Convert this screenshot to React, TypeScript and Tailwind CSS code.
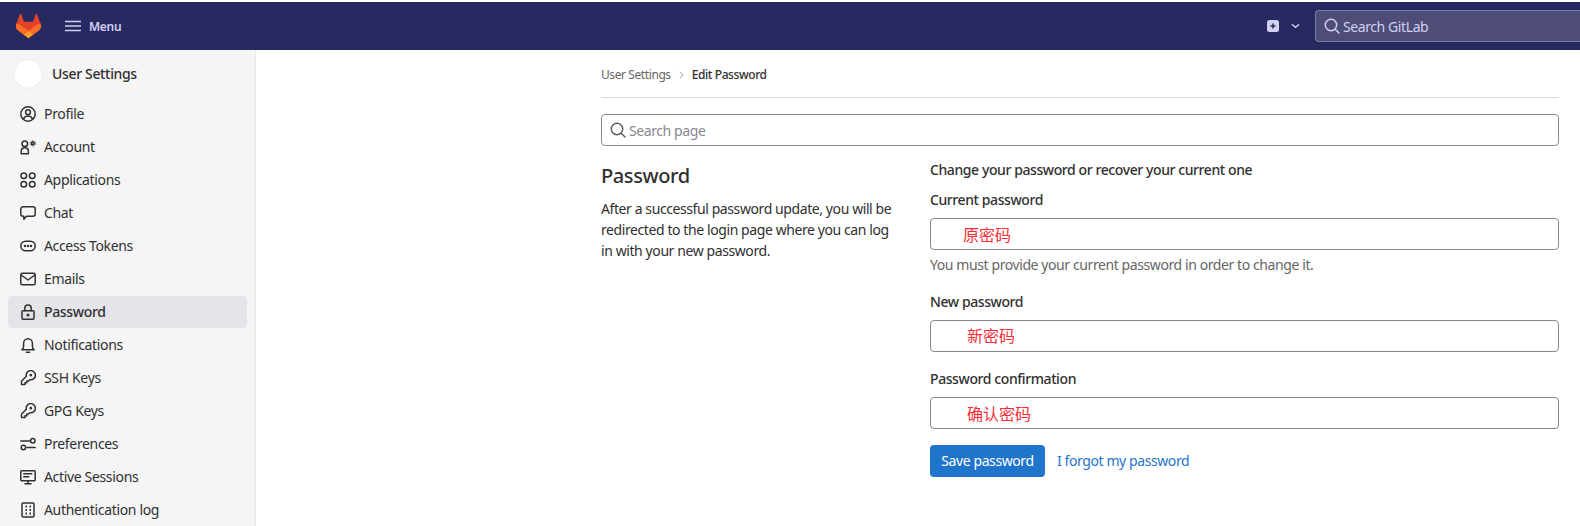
import type { ReactNode } from "react";

const font = { fontFamily: '"Noto Sans", "Noto Sans CJK SC", sans-serif' };

function Glyph({ children }: { children: ReactNode }) {
  return (
    <svg
      viewBox="0 0 16 16"
      className="h-4 w-4 shrink-0 text-[#303030]"
      fill="none"
      stroke="currentColor"
      strokeWidth="1.5"
      strokeLinecap="round"
      strokeLinejoin="round"
    >
      {children}
    </svg>
  );
}

const Key = (
  <>
    <path d="M6.300 6.200a4.600 4.600 0 1 1 3.500 3.500L8.500 11H6.800v1.700H5v1.800H1.500v-3.200z" />
    <circle cx="10.800" cy="5.200" r=".6" fill="currentColor" />
  </>
);

const items: { label: string; icon: ReactNode; active?: boolean }[] = [
  {
    label: "Profile",
    icon: (
      <>
        <circle cx="8" cy="8" r="7.200" />
        <circle cx="8" cy="6.200" r="2.400" />
        <path d="M3.600 13c.6-2 2.400-3 4.400-3s3.800 1 4.400 3" />
      </>
    ),
  },
  {
    label: "Account",
    icon: (
      <>
        <circle cx="4.800" cy="4.800" r="2.800" />
        <path d="M1.200 14.800v-2.600c0-2 1.600-3.400 3.600-3.400s3.600 1.400 3.600 3.400v2.600z" />
        <circle cx="12.800" cy="4.400" r="1.300" strokeWidth="1.600" />
        <circle cx="12.800" cy="4.400" r="2.700" strokeWidth="1" strokeDasharray="1.400 1.430" strokeLinecap="butt" />
      </>
    ),
  },
  {
    label: "Applications",
    icon: (
      <>
        <circle cx="3.800" cy="3.800" r="2.800" />
        <circle cx="12.200" cy="3.800" r="2.800" />
        <circle cx="3.800" cy="12.200" r="2.800" />
        <circle cx="12.200" cy="12.200" r="2.800" />
      </>
    ),
  },
  {
    label: "Chat",
    icon: <path d="M3 1.800h10c1.200 0 2.200 1 2.200 2.200v5c0 1.200-1 2.200-2.200 2.200H6.500l-2.700 3V11.200H3C1.800 11.200.8 10.200.8 9V4c0-1.200 1-2.200 2.200-2.200z" />,
  },
  {
    label: "Access Tokens",
    icon: (
      <>
        <rect x=".8" y="3.200" width="14.400" height="9.600" rx="4.800" />
        <circle cx="5" cy="8" r=".5" fill="currentColor" />
        <circle cx="8" cy="8" r=".5" fill="currentColor" />
        <circle cx="11" cy="8" r=".5" fill="currentColor" />
      </>
    ),
  },
  {
    label: "Emails",
    icon: (
      <>
        <rect x=".8" y="2.200" width="14.400" height="11.600" rx="1.600" />
        <path d="m1.200 4 6.800 5 6.800-5" />
      </>
    ),
  },
  {
    label: "Password",
    active: true,
    icon: (
      <>
        <rect x="2" y="6.800" width="12" height="8.400" rx="1" />
        <path d="M4.800 6.800V4.200a3.200 3.200 0 0 1 6.400 0v2.600" />
        <circle cx="8" cy="11" r=".8" fill="currentColor" />
      </>
    ),
  },
  {
    label: "Notifications",
    icon: (
      <>
        <path d="M1.800 12.800c1.200-1 1.800-2 1.800-3.600V6.200a4.400 4.400 0 0 1 8.800 0v3c0 1.600.6 2.600 1.800 3.600z" />
        <path d="M6.400 15.200h3.200" />
      </>
    ),
  },
  { label: "SSH Keys", icon: Key },
  { label: "GPG Keys", icon: Key },
  {
    label: "Preferences",
    icon: (
      <>
        <path d="M.8 5h9.200M7 11.500h8.200" />
        <circle cx="12.800" cy="4.800" r="2.200" />
        <circle cx="3.400" cy="11.500" r="2.200" />
      </>
    ),
  },
  {
    label: "Active Sessions",
    icon: (
      <>
        <rect x=".8" y="1.800" width="14.400" height="10" rx="1" />
        <path d="M3.800 4.800h8M3.800 7.800h5M5 14.800h6M8 12v2.800" />
      </>
    ),
  },
  {
    label: "Authentication log",
    icon: (
      <>
        <rect x="2" y="1" width="12" height="14" rx="1" />
        <path d="M5.500 4.500h1.500M9.500 4.500h1.500M5.500 8h1.500M9.500 8h1.500M5.500 11.500h1.500M9.500 11.500h1.500" strokeWidth="1.800" strokeLinecap="butt" />
      </>
    ),
  },
];

function SearchIcon({ className }: { className: string }) {
  return (
    <svg viewBox="0 0 16 16" className={className} fill="none" stroke="currentColor" strokeWidth="1.5" strokeLinecap="round">
      <circle cx="7" cy="7" r="5.700" />
      <path d="m11.200 11.200 3.800 3.800" />
    </svg>
  );
}

function Annotated({ text, indent }: { text: string; indent: string }) {
  return (
    <div className={`mt-2 flex h-8 items-center rounded border border-[#89888d] bg-white text-base tracking-normal text-[#fb2c36] ${indent}`}>
      {text}
    </div>
  );
}

export default function App() {
  return (
    <div className="flex h-[526px] flex-col overflow-hidden bg-white text-sm tracking-[-0.41px] text-[#303030]" style={font}>
      <div className="h-[2px] shrink-0 bg-white" />
      <header className="flex h-12 shrink-0 items-center bg-[#292961] pl-4">
        <svg viewBox="0 0 25 24" className="h-6 w-[25px]">
          <path d="m24.507 9.5-.034-.09L21.082.562a.896.896 0 0 0-1.694.091l-2.29 7.01H7.825L5.535.653a.898.898 0 0 0-1.694-.09L.451 9.411.416 9.5a6.297 6.297 0 0 0 2.09 7.278l.012.01.03.022 5.16 3.867 2.56 1.935 1.554 1.176a1.051 1.051 0 0 0 1.268 0l1.555-1.176 2.56-1.935 5.197-3.89.014-.01A6.297 6.297 0 0 0 24.507 9.5Z" fill="#E24329" />
          <path d="m24.507 9.5-.034-.09a11.44 11.44 0 0 0-4.56 2.051l-7.447 5.632 4.742 3.584 5.197-3.89.014-.01A6.297 6.297 0 0 0 24.507 9.5Z" fill="#FC6D26" />
          <path d="m7.707 20.677 2.56 1.935 1.555 1.176a1.051 1.051 0 0 0 1.268 0l1.555-1.176 2.56-1.935-4.743-3.584-4.755 3.584Z" fill="#FCA326" />
          <path d="M5.010 11.461a11.430 11.430 0 0 0-4.560-2.050L.416 9.500a6.297 6.297 0 0 0 2.090 7.278l.012.010.030.022 5.160 3.867 4.745-3.584-7.444-5.632Z" fill="#FC6D26" />
        </svg>
        <svg viewBox="0 0 16 12" className="ml-6 h-3 w-4 text-[#d1d0f0]" stroke="currentColor" strokeWidth="1.500">
          <path d="M0 1.500h16M0 6h16M0 10.500h16" />
        </svg>
        <span className="ml-2 pt-[2px] text-xs font-semibold tracking-[-0.3px] text-[#d1d0f0]">Menu</span>
        <div className="ml-auto flex items-center">
          <svg viewBox="0 0 12 12" className="h-3 w-3">
            <rect width="12" height="12" rx="2.500" fill="#d1d0f0" />
            <path d="M6 3.500v5M3.500 6h5" stroke="#292961" strokeWidth="1.500" />
          </svg>
          <svg viewBox="0 0 10 6" className="ml-3 h-[6px] w-[9px] text-[#d1d0f0]" fill="none" stroke="currentColor" strokeWidth="1.500">
            <path d="m1 1 4 3.500L9 1" />
          </svg>
          <div className="ml-[15px] flex h-8 w-[265px] items-center rounded-l border border-r-0 border-[#7c7ca8] bg-[#4d4d78] pl-2 text-[#d1d0f0]">
            <SearchIcon className="h-4 w-4 shrink-0" />
            <input readOnly placeholder="Search GitLab" className="ml-[3px] w-full bg-transparent pt-[2px] outline-none placeholder:text-[#d1d0f0]" />
          </div>
        </div>
      </header>
      <div className="flex min-h-0 flex-1">
        <aside className="w-[256px] shrink-0 border-r border-[#e8e8e8] bg-[#f5f5f5] px-2 tracking-[-0.34px]">
          <div className="flex h-[48px] items-center pl-[5px]">
            <div className="h-[30px] w-[30px] rounded-full border border-[#ececec] bg-white" />
            <span className="ml-[9px] font-medium">User Settings</span>
          </div>
          <nav className="flex flex-col gap-[1px]">
            {items.map((item) => (
              <div
                key={item.label}
                className={`flex h-8 w-[239px] items-center gap-2 rounded-[4px] pl-3 ${item.active ? "bg-[#e4e4e9] font-medium" : ""}`}
              >
                <Glyph>{item.icon}</Glyph>
                <span>{item.label}</span>
              </div>
            ))}
          </nav>
        </aside>
        <main className="flex-1 pl-[345px] pr-[21px]">
          <div className="flex h-[48px] items-center gap-2 border-b border-[#dcdcde] pt-[2px] text-xs">
            <span className="text-[#666]">User Settings</span>
            <svg viewBox="0 0 6 10" className="h-2 w-[5px] text-[#888]" fill="none" stroke="currentColor">
              <path d="m1 1 4 4-4 4" />
            </svg>
            <span className="font-medium">Edit Password</span>
          </div>
          <div className="mt-4 flex h-8 items-center rounded border border-[#89888d] pl-2 text-[#5e5e5e]">
            <SearchIcon className="h-4 w-4 shrink-0" />
            <input readOnly placeholder="Search page" className="ml-[3px] w-full pt-[2px] outline-none placeholder:text-[#89888d]" />
          </div>
          <div className="flex">
            <section className="mt-[16px] w-[329px] shrink-0">
              <h2 className="text-xl font-medium leading-7">Password</h2>
              <p className="mt-2 w-[300px] leading-[21px]">
                After a successful password update, you will be redirected to the login page where you can log in with your new password.
              </p>
            </section>
            <form className="mt-[14px] flex-1">
              <h3 className="font-medium leading-5">Change your password or recover your current one</h3>
              <label className="mt-[10px] block font-medium leading-5">Current password</label>
              <Annotated text="原密码" indent="pl-8 pt-[1px]" />
              <p className="mt-[5px] leading-5 text-[#666]">You must provide your current password in order to change it.</p>
              <label className="mt-[17px] block font-medium leading-5">New password</label>
              <Annotated text="新密码" indent="pl-9" />
              <label className="mt-[17px] block font-medium leading-5">Password confirmation</label>
              <Annotated text="确认密码" indent="pl-9 pt-[2px]" />
              <div className="mt-4 flex items-center">
                <button type="button" className="h-8 w-[115px] rounded bg-[#1f75cb] text-white">Save password</button>
                <a className="ml-3 text-[#1f75cb]">I forgot my password</a>
              </div>
            </form>
          </div>
        </main>
      </div>
    </div>
  );
}
